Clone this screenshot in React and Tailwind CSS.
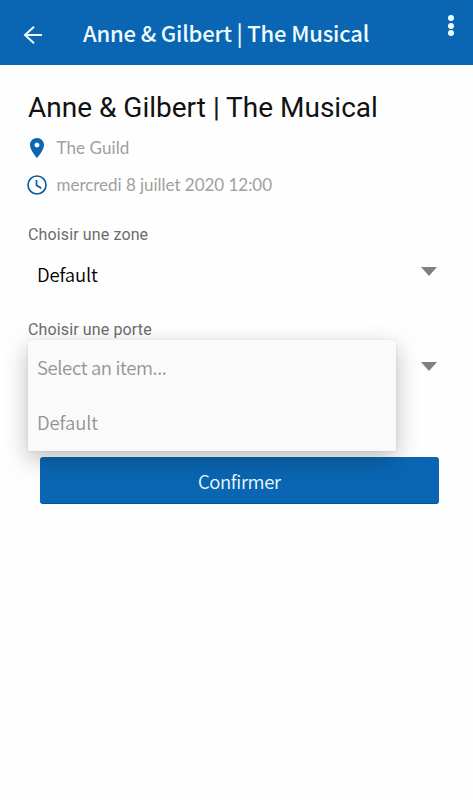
import { MdLocationOn } from "react-icons/md";

const doors = [
  { label: "Select an item...", spacing: "tracking-[-0.38px]" },
  { label: "Default", spacing: "tracking-[-0.1px]" },
];

function Caret() {
  return (
    <svg viewBox="0 0 16 9" className="h-[9px] w-4 fill-[#808080]">
      <path d="M0 0h16L8 9z" />
    </svg>
  );
}

function Field({ label, value, children }) {
  return (
    <div className="relative h-[94.5px]">
      <div className="font-['Roboto',sans-serif] text-[16px] leading-5 tracking-[0.13px] text-[#6c6c6c]">
        {label}
      </div>
      <div className="flex h-[58px] items-center justify-between pl-[9px] pr-2 text-[18.5px] font-[350] leading-6 text-black">
        <span className="tracking-[-0.15px]">{value}</span>
        <span className="pb-[5px]">
          <Caret />
        </span>
      </div>
      {children}
    </div>
  );
}

export default function App() {
  return (
    <div className="min-h-screen w-full overflow-hidden bg-[#fefefe] font-['Noto_Sans_CJK_SC',sans-serif]">
      <header className="flex h-[65px] items-start bg-[#0a66b2] text-[#effcff]">
        <button className="ml-[22.5px] mt-[25px]">
          <svg
            viewBox="0 0 20 20"
            className="size-5 fill-none stroke-current stroke-2"
          >
            <path d="M11 1.8 2 10l9 8.2M2 10h17" />
          </svg>
        </button>
        <h1 className="ml-[40.5px] mt-[16px] whitespace-nowrap text-[22px] font-medium leading-8 tracking-[-0.18px]">
          Anne &amp; Gilbert | The Musical
        </h1>
        <button className="ml-auto mr-[19px] mt-[15px] flex flex-col gap-[1.7px]">
          <span className="size-[6px] rounded-full bg-[#effcff]" />
          <span className="size-[6px] rounded-full bg-[#effcff]" />
          <span className="size-[6px] rounded-full bg-[#effcff]" />
        </button>
      </header>

      <main className="px-7">
        <h2 className="mt-[27px] whitespace-nowrap font-['Roboto',sans-serif] text-[28px] leading-8 text-[#111]">
          Anne &amp; Gilbert | The Musical
        </h2>

        <div className="mt-[12px] flex h-6 items-center font-['Lato',sans-serif] text-[17px] tracking-[0.1px] text-[#a0a0a0]">
          <MdLocationOn className="-ml-[3px] size-6 text-[#0a66b2]" />
          <span className="ml-[7.5px]">The Guild</span>
        </div>
        <div className="mt-[13px] flex h-6 items-center font-['Lato',sans-serif] text-[17px] text-[#a0a0a0]">
          <svg
            viewBox="0 0 20 20"
            className="-ml-px size-5 fill-none stroke-[#075899] stroke-[1.6]"
          >
            <circle cx="10" cy="10" r="9" />
            <path d="M9.5 5v5.3l4.8 2.9" />
          </svg>
          <span className="ml-[9.5px] whitespace-nowrap tracking-[-0.03px]">
            mercredi 8 juillet 2020 12:00
          </span>
        </div>

        <div className="mt-[28px]">
          <Field label="Choisir une zone" value="Default" />
          <Field label="Choisir une porte">
            <ul className="absolute left-0 top-[20.5px] z-10 h-[111px] w-[368px] rounded-[2px] bg-[#fafafa] text-[18.5px] font-[350] text-[#949494] shadow-[0_8px_24px_rgba(0,0,0,0.26),0_0_3px_rgba(0,0,0,0.08)]">
              {doors.map(({ label, spacing }) => (
                <li
                  key={label}
                  className={`flex h-[55px] items-center pl-[9px] pt-px ${spacing}`}
                >
                  {label}
                </li>
              ))}
            </ul>
          </Field>
        </div>

        <button className="ml-[11.5px] mt-[43px] h-[47px] w-[399.5px] rounded-[3px] border-b border-[#075394] bg-[#0a66b2] pt-[3px] text-[18.5px] font-[350] tracking-[-0.4px] text-[#effcff]">
          Confirmer
        </button>
      </main>
    </div>
  );
}
